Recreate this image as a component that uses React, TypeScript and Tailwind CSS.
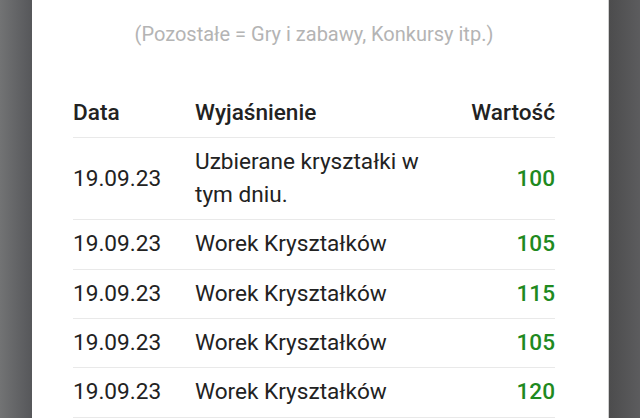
import React from "react";

const rows = [
  { date: "19.09.23", desc: "Uzbierane kryształki w tym dniu.", value: "100" },
  { date: "19.09.23", desc: "Worek Kryształków", value: "105" },
  { date: "19.09.23", desc: "Worek Kryształków", value: "115" },
  { date: "19.09.23", desc: "Worek Kryształków", value: "105" },
  { date: "19.09.23", desc: "Worek Kryształków", value: "120" },
];

export default function App() {
  return (
    <div
      className="w-[640px] h-[418px] overflow-hidden flex"
      style={{ fontFamily: "Roboto, 'Noto Sans', sans-serif" }}
    >
      <div className="w-[32px] h-full bg-gradient-to-r from-[#727374] to-[#56575a]" />
      <div className="flex-1 h-full bg-white pl-[41px] pr-[53px] pt-[20px] border-r border-[#cfcfcf]">
        <div className="text-center text-[20px] leading-[29px] text-[#b4b4b4]">
          (Pozostałe = Gry i zabawy, Konkursy itp.)
        </div>
        <div className="mt-[40px] text-[22.6px] leading-[32.4px] text-[#222222]">
          <div className="grid grid-cols-[122px_240px_1fr] py-2 border-b border-[#e9e9e9] font-medium">
            <div>Data</div>
            <div>Wyjaśnienie</div>
            <div className="text-right">Wartość</div>
          </div>
          {rows.map((r, i) => (
            <div
              key={i}
              className="grid grid-cols-[122px_240px_1fr] items-center py-2 border-b border-[#e9e9e9]"
            >
              <div>{r.date}</div>
              <div>{r.desc}</div>
              <div className="text-right font-medium text-[#1f8a1f]">{r.value}</div>
            </div>
          ))}
        </div>
      </div>
      <div className="w-[31px] h-full bg-gradient-to-r from-[#4c4c4d] to-[#5c5c5e]" />
    </div>
  );
}
